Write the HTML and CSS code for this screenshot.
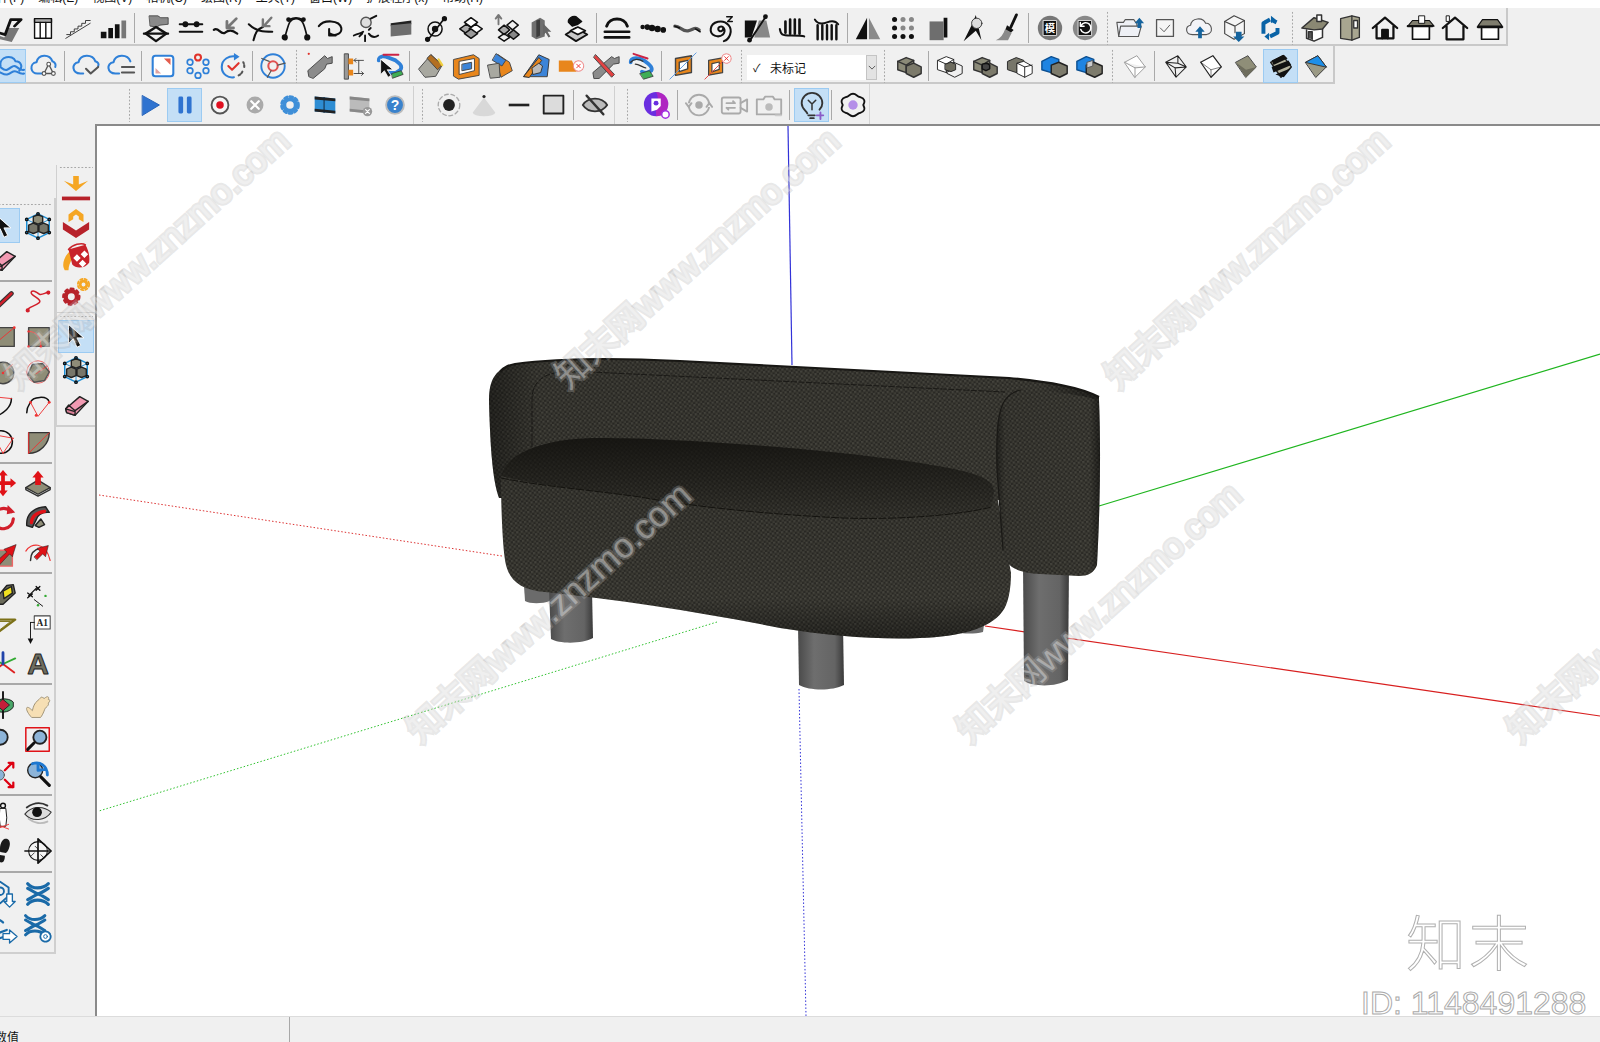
FILE: index.html
```html
<!DOCTYPE html>
<html lang="zh-CN">
<head>
<meta charset="utf-8">
<title>SketchUp</title>
<link rel="stylesheet" href="styles.css">
</head>
<body>
<svg class="defs" width="0" height="0" aria-hidden="true">
  <symbol id="cubes" viewBox="0 0 32 32"><path d="M4 11l9-4 8 3v9l-8 4-9-3z" fill="#8b8a78" stroke="#333"/><path d="M13 16l8-3 8 4v7l-8 4-8-4z" fill="#7c7a6b" stroke="#333"/><path d="M4 11l9 4v8M13 15l8-5" stroke="#333" fill="none"/></symbol>
  <symbol id="arrow" viewBox="0 0 32 32"><path d="M8 4l0 20 5-5 4 9 4-2-4-8h7z" fill="#111" stroke="#fff" stroke-width="1"/></symbol>
  <symbol id="cubeblue" viewBox="0 0 32 32"><path d="M16 3l12 6v14l-12 6-12-6V9z" fill="none" stroke="#1d8fd6" stroke-width="1.6"/><path d="M4 9l12 6 12-6M16 15v14" stroke="#1d8fd6" fill="none" stroke-width="1"/><path d="M11 6l5-2 5 2v6l-5 2-5-2z" fill="#8e8c78" stroke="#222"/><path d="M6 15l5-2 5 2v7l-5 2-5-2zM17 15l5-2 5 2v7l-5 2-5-2z" fill="#77766a" stroke="#222"/><circle cx="16" cy="3" r="1.3" fill="#1d8fd6"/><circle cx="4" cy="9" r="1.3" fill="#1d8fd6"/><circle cx="28" cy="9" r="1.3" fill="#1d8fd6"/><circle cx="4" cy="23" r="1.3" fill="#1d8fd6"/><circle cx="28" cy="23" r="1.3" fill="#1d8fd6"/><circle cx="16" cy="29" r="1.3" fill="#1d8fd6"/></symbol>
  <symbol id="eraser" viewBox="0 0 32 32"><path d="M5 19L20 6l9 5-14 15-9-3z" fill="#f29ab2" stroke="#222"/><path d="M5 19l3-4 7 6 14-10" fill="none" stroke="#222"/><path d="M5 19l10 3v4l-9-3z" fill="#d97f97" stroke="#222"/></symbol>
  <symbol id="wave" viewBox="0 0 32 32"><path d="M5 5c5 6 16 6 22 0M5 27c5-6 16-6 22 0M5 10c6 3 8 5 11 6 4-1 6-3 11-6M5 22c6-3 8-5 11-6 4 1 6 3 11 6" fill="none" stroke="#1a6aa8" stroke-width="3.4"/></symbol>
  <symbol id="frame" viewBox="0 0 32 32"><path d="M8 8l17-3v18L8 26z" fill="#e8861c" stroke="#444"/><path d="M12 12l9-2v9l-9 3z" fill="#fff" stroke="#444"/></symbol>
</svg>

<nav class="menu">
  <span>文件(F)</span><span>编辑(E)</span><span>视图(V)</span><span>相机(C)</span><span>绘图(R)</span><span>工具(T)</span><span>窗口(W)</span><span>扩展程序(x)</span><span>帮助(H)</span>
</nav>

<div class="tbar row1">
  <span class="btn"><svg class="ico" viewBox="0 0 32 32"><path d="M3 23l9 3 5-10h11l-8 15-13-3z" fill="#777" stroke="none"/><path d="M2 20l11 3 6-16h11l-7 7" stroke-width="3"/></svg></span>
  <span class="btn"><svg class="ico" viewBox="0 0 32 32"><rect x="7" y="6" width="18" height="21" fill="#fff"/><path d="M7 6h18v4H7z" fill="#aaa"/><path d="M13 10v17M19 10v17"/></svg></span>
  <span class="btn"><svg class="ico" viewBox="0 0 32 32" stroke-width="1"><path d="M3 27L29 11" stroke="#333"/><path d="M4 23h4v-3h4v-3h4v-3h4v-3h4V8h5" stroke="#333"/></svg></span>
  <span class="btn"><svg class="ico" viewBox="0 0 32 32" stroke="none"><path d="M3 20h6v7H3zM11 16h5v11h-5zM18 12h5v15h-5z" fill="#111" stroke="none"/><path d="M25 8h5v19h-5z" fill="#777" stroke="none"/></svg></span>
  <i class="sep w8"></i>
  <span class="btn"><svg class="ico" viewBox="0 0 32 32"><path d="M9 3h9l3 2h8v7l-9 1-3 2-7-1z" fill="#8a8a8a" stroke="#333" stroke-width=".8"/><path d="M16 15l11 7-11 8-11-8z" stroke-width="2.6"/><path d="M3 22h26" stroke-width="2.2"/></svg></span>
  <span class="btn"><svg class="ico" viewBox="0 0 32 32" stroke-width="2.2"><path d="M4 12h24M4 20h24"/><circle cx="10" cy="12" r="2" fill="#111"/><circle cx="22" cy="12" r="2" fill="#111"/></svg></span>
  <span class="btn"><svg class="ico" viewBox="0 0 32 32"><path d="M3 18c5-4 7 6 12 3 4-3 7-3 13 1" stroke-width="2.4"/><path d="M17 16l10-10M17 9v7h7" stroke="#777" stroke-width="3"/></svg></span>
  <span class="btn"><svg class="ico" viewBox="0 0 32 32"><path d="M3 12c8 8 16 8 25 8M8 29c2-8 4-12 10-14" stroke-width="2.2"/><path d="M19 14l8-9M18 7v7h7" stroke="#777" stroke-width="2.6"/></svg></span>
  <span class="btn"><svg class="ico" viewBox="0 0 32 32" stroke-width="1.8"><path d="M4 26C8 14 8 6 16 6s9 8 12 20"/><path d="M9 7c4-2 10-2 14 0" /><circle cx="4" cy="26" r="2.4" fill="#111"/><circle cx="28" cy="26" r="2.4" fill="#111"/><circle cx="8" cy="7" r="1.6" fill="#111"/><circle cx="24" cy="7" r="1.6" fill="#111"/></svg></span>
  <span class="btn"><svg class="ico" viewBox="0 0 32 32" stroke-width="2.2"><path d="M3 14c5-7 22-7 24 2 1 7-8 9-12 6"/><path d="M14 17v7h7"/></svg></span>
  <span class="btn"><svg class="ico" viewBox="0 0 32 32"><circle cx="16" cy="10" r="5.5" fill="#ddd" stroke="#555"/><path d="M21 6l6-3" stroke-width="2"/><path d="M3 24c6-3 6-1 10-4M19 22c3 4 6 5 10 2M15 24v6M12 22l-3 3M19 18l2-2" stroke-width="2"/></svg></span>
  <span class="btn"><svg class="ico" viewBox="0 0 32 32" stroke="none"><path d="M5 11l22-3v4L5 14z" fill="#222"/><path d="M5 13l22-2v12l-22 2z" fill="#6e6e6e"/></svg></span>
  <span class="btn"><svg class="ico" viewBox="0 0 32 32" stroke-width="1.6"><circle cx="15" cy="17" r="7.5"/><path d="M8 28L24 7" stroke-width="1.8"/><circle cx="15" cy="17" r="2.6" fill="#111"/><circle cx="7" cy="28" r="2" fill="#111"/><circle cx="25" cy="6" r="2" fill="#111"/></svg></span>
  <span class="btn"><svg class="ico" viewBox="0 0 32 32" stroke-width="1.6"><path d="M16 5l7 5-7 5-7-5z" fill="#fff"/><path d="M8 11l7 5-7 5-7-5z" fill="#aaa" transform="translate(3 1)"/><path d="M24 11l7 5-7 5-7-5z" fill="#fff" transform="translate(-3 1)"/><path d="M16 17l7 5-7 5-7-5z" fill="#999"/></svg></span>
  <span class="btn"><svg class="ico" viewBox="0 0 32 32" stroke-width="1.6"><path d="M23 8l6 5-6 5-6-5z"/><path d="M14 13l6 5-6 5-6-5z" fill="#aaa"/><path d="M24 18l6 5-6 5-6-5z" fill="#888"/><path d="M14 22l6 4-6 4-6-4z"/><path d="M8 12V3M5 6l3-4 3 4" stroke="#777" stroke-width="2"/></svg></span>
  <span class="btn"><svg class="ico" viewBox="0 0 32 32" stroke="none"><path d="M6 10l9-5 5 3v17l-9 3-5-3z" fill="#6f6f6f" stroke="none"/><path d="M11 8l4-1v17l-4 2z" fill="#3d3d3d" stroke="none"/><path d="M18 11l9 9-4 0 3 5-2 1-3-5-3 3z" fill="#666" stroke="none"/></svg></span>
  <span class="btn"><svg class="ico" viewBox="0 0 32 32"><path d="M16 16l12 7-12 7-11-7z" fill="#c9c9c9" stroke-width="2"/><path d="M8 10c-1-4 4-7 8-6l6 5-4 3-6 2z" fill="#111"/><path d="M18 15l8 4-8 4-8-4z" fill="#fff" stroke-width="1.8"/></svg></span>
  <i class="sep w6"></i>
  <span class="btn"><svg class="ico" viewBox="0 0 32 32"><path d="M5 14C8 4 24 4 27 14" stroke-width="3.2"/><path d="M3 20c10 0 16 0 26 0M3 26h26" stroke-width="2.8"/></svg></span>
  <span class="btn"><svg class="ico" viewBox="0 0 32 32" stroke="none"><circle cx="6" cy="15" r="2.4" fill="#111"/><circle cx="11" cy="15" r="3" fill="#111"/><circle cx="16" cy="16" r="3.4" fill="#111"/><circle cx="22" cy="17" r="3.4" fill="#111"/><circle cx="28" cy="18" r="3" fill="#111"/></svg></span>
  <span class="btn"><svg class="ico" viewBox="0 0 32 32"><path d="M3 14c6 0 8 6 14 5s7-5 12-1" stroke="#555" stroke-width="3.4"/><path d="M3 14l5 2M25 17l5 3" stroke-width="1.6"/></svg></span>
  <span class="btn"><svg class="ico" viewBox="0 0 32 32" stroke-width="2.2"><path d="M17 17a2.5 2.5 0 1 1-4-2c4-2 8 3 4 8-5 4-14 1-13-6 1-8 13-11 19-4 5 6 1 15-5 17"/><path d="M21 4h6l-5 5h5" stroke-width="1.5"/></svg></span>
  <span class="btn"><svg class="ico" viewBox="0 0 32 32"><path d="M3 8h13l-6 18H3z" fill="#111" stroke="none"/><path d="M18 8l8 0 4 18H13z" fill="#888" stroke="none"/><path d="M8 30L26 3" stroke-width="2"/><circle cx="25" cy="4" r="1.8" fill="#111"/><circle cx="8" cy="29" r="1.8" fill="#111"/></svg></span>
  <span class="btn"><svg class="ico" viewBox="0 0 32 32" stroke-width="2.2"><path d="M3 17c1 6 2 7 12 7 8 0 12 0 14 1"/><path d="M9 9v12M14 7v15M19 7v15M24 7v15" stroke-width="2.8"/></svg></span>
  <span class="btn"><svg class="ico" viewBox="0 0 32 32" stroke-width="2.6"><path d="M3 7c3 5 8 5 13 3s9-2 12 2" stroke-width="2"/><path d="M6 13v15M11 13v15M16 13v15M21 13v15M26 13v15"/></svg></span>
  <i class="sep w6"></i>
  <span class="btn"><svg class="ico" viewBox="0 0 32 32" stroke="none"><path d="M15 5v23H3z" fill="#111" stroke="none"/><path d="M17 5v23h12z" fill="#8a8a8a" stroke="none"/></svg></span>
  <span class="btn"><svg class="ico" viewBox="0 0 32 32" stroke="none"><g fill="#111"><circle cx="7" cy="7" r="2.7"/><circle cx="16" cy="7" r="2.7" fill="#888"/><circle cx="25" cy="7" r="2.7" fill="#888"/><circle cx="7" cy="16" r="2.7"/><circle cx="16" cy="16" r="2.7" fill="#888"/><circle cx="25" cy="16" r="2.7" fill="#888"/><circle cx="7" cy="25" r="2.7"/><circle cx="16" cy="25" r="2.7"/><circle cx="25" cy="25" r="2.7"/></g></svg></span>
  <span class="btn"><svg class="ico" viewBox="0 0 32 32" stroke="none"><path d="M11 5h15v21h-4V5z" fill="#111"/><path d="M7 9h15v20H7z" fill="#6e6e6e"/></svg></span>
  <span class="btn"><svg class="ico" viewBox="0 0 32 32"><path d="M19 2l6 27-6-10-13 11 9-18z" fill="#111" stroke="none"/><circle cx="20" cy="11" r="5.5" fill="#ddd" stroke="#333" stroke-width="1"/></svg></span>
  <span class="btn"><svg class="ico" viewBox="0 0 32 32"><path d="M25 2l-6 13" stroke-width="3"/><path d="M15 13l7 5-3 3-6-3z" fill="#111" stroke="none"/><path d="M13 17l7 4-4 8H3c5-2 8-6 10-12z" fill="#8a8a8a" stroke="none"/></svg></span>
  <i class="sep w7"></i>
  <span class="btn"><svg class="ico" viewBox="0 0 32 32" stroke="none"><circle cx="16" cy="16" r="13" fill="#777"/><rect x="9" y="8" width="14" height="16" fill="#111" stroke="#ddd" stroke-width="1"/><text x="16" y="20.5" class="ico-text" fill="#fff">模</text></svg></span>
  <span class="btn"><svg class="ico" viewBox="0 0 32 32" stroke="none"><circle cx="16" cy="16" r="13" fill="#888"/><rect x="9" y="8" width="14" height="16" fill="#111" stroke="#ddd" stroke-width="1"/><path d="M12 13a5.5 5.5 0 1 1-.5 4.5M11 10v4h4" fill="none" stroke="#fff" stroke-width="1.6"/></svg></span>
  <i class="grip g10"></i>
  <span class="btn"><svg class="ico" viewBox="0 0 32 32" stroke="#555" stroke-width="1.2"><path d="M4 25l-2-15h7l2-3h9l2 3h1l2 15z" fill="#eef0f5"/><path d="M4 25l2-11h22l-3 11z" fill="#eef0f5"/><path d="M26 5l5 6h-3v5h-4v-5h-3z" fill="#15639d" stroke="none"/></svg></span>
  <span class="btn"><svg class="ico" viewBox="0 0 32 32" stroke="#555" stroke-width="1.4"><rect x="7" y="7" width="18" height="18" fill="#f5f5f5"/><path d="M11 16l4 4 6-7" stroke-width="1"/></svg></span>
  <span class="btn"><svg class="ico" viewBox="0 0 32 32" stroke="#555" stroke-width="1.2"><path d="M8 23c-8 0-8-9-2-10 1-8 13-9 16-2 7-1 9 11 1 12z" fill="#f3f3f7"/><path d="M16 14l5 6h-3v7h-4v-7h-3z" fill="#15639d" stroke="none"/></svg></span>
  <span class="btn"><svg class="ico" viewBox="0 0 32 32" stroke="#444" stroke-width="1.2"><path d="M15 3l11 5v14l-11 6-10-6V9z" fill="#f5f5f5"/><path d="M5 9l11 5 10-6M16 14v7"/><path d="M17 20h6v5h3l-6 6-6-6h3z" fill="#15639d" stroke="none"/></svg></span>
  <span class="btn"><svg class="ico" viewBox="0 0 32 32" stroke="#0a63a6" stroke-width="4.2" stroke-linecap="butt"><path d="M9 22V11l7-4M16 25l8-4v-5M23 10l-4-2M9 11l3-2" /><path d="M17 3l5 4-5 4zM15 21v8l-5-4z" fill="#0a63a6" stroke="none"/></svg></span>
  <i class="grip g10"></i>
  <span class="btn"><svg class="ico" viewBox="0 0 32 32" stroke-width="1.6" stroke="#333"><path d="M7 18v9l8 3 9-4v-9" fill="#fff"/><path d="M2 16L15 5l15 5-6 7-9 1z" fill="#8a8873"/><rect x="18" y="2" width="5" height="7" fill="#fff"/><path d="M9 27v-7h4v8" fill="#555"/></svg></span>
  <span class="btn"><svg class="ico" viewBox="0 0 32 32" stroke="#333" stroke-width="1.4"><path d="M6 6l12-3 8 2v21l-8 3-12-2z" fill="#a8a690"/><path d="M18 3v26"/><rect x="20" y="8" width="4" height="8" fill="#fff"/></svg></span>
  <span class="btn"><svg class="ico" viewBox="0 0 32 32" stroke-width="2.4"><path d="M3 16L16 5l13 11M7 14v13h18V14"/><path d="M13 27v-9h6v9" fill="#111"/></svg></span>
  <span class="btn"><svg class="ico" viewBox="0 0 32 32" stroke-width="1.8"><path d="M8 28V14h18v14z" fill="#fff"/><path d="M3 14l5-6h18l5 6z" fill="#7f7d6e" stroke-width="1.2"/><path d="M3 14h26" stroke-width="2.4"/><rect x="15" y="3" width="6" height="8" fill="#fff" stroke-width="1"/></svg></span>
  <span class="btn"><svg class="ico" viewBox="0 0 32 32" stroke-width="2.4"><path d="M3 16L16 5l13 11M7 14v14h18V14"/><rect x="7" y="3" width="3" height="6" fill="#fff" stroke-width="1"/></svg></span>
  <span class="btn"><svg class="ico" viewBox="0 0 32 32" stroke-width="1.8"><path d="M7 28V14h18v14z" fill="#fff"/><path d="M3 14l5-7h16l5 7z" fill="#7f7d6e" stroke-width="1.2"/><path d="M3 15h26" stroke-width="2.4"/></svg></span>
</div>

<div class="tbar row2">
  <span class="btn on"><svg class="ico" viewBox="0 0 32 32" stroke="#2f80d8" stroke-width="2.2"><path d="M7 16C5 6 20 3 23 11c6 0 8 6 4 10"/><path d="M2 17c4-4 7 5 12 3s6-6 10-3 6 4 8 3M2 23c4-3 7 3 12 2s6-5 10-3 6 3 8 2"/></svg></span>
  <span class="btn"><svg class="ico" viewBox="0 0 32 32" stroke="#2f80d8" stroke-width="2.2"><path d="M10 24c-9 1-10-11-2-12 2-9 14-9 17-1 3 1 4 4 3 6M10 24h4"/><path d="M21 14l-5 10h10z" stroke="#555" stroke-width="1.4"/><circle cx="21" cy="14" r="2" fill="#fff" stroke="#555" stroke-width="1.2"/><circle cx="16" cy="24" r="2" fill="#fff" stroke="#555" stroke-width="1.2"/><circle cx="26" cy="24" r="2" fill="#fff" stroke="#555" stroke-width="1.2"/></svg></span>
  <i class="sep w7"></i>
  <span class="btn"><svg class="ico" viewBox="0 0 32 32" stroke="#2f80d8" stroke-width="2.2"><path d="M13 24h-3c-9 0-10-11-2-12 2-9 15-9 18-1 3 1 4 3 3 5"/><path d="M16 19l5 5 8-7" stroke="#555"/></svg></span>
  <span class="btn"><svg class="ico" viewBox="0 0 32 32" stroke="#2f80d8" stroke-width="2.2"><path d="M14 24h-4c-9 0-10-11-2-12 2-9 15-9 18-1"/><path d="M17 17h13M17 23h13" stroke="#555"/></svg></span>
  <i class="sep w7"></i>
  <span class="btn"><svg class="ico" viewBox="0 0 32 32"><rect x="5" y="5" width="22" height="22" rx="3" fill="#fff" stroke="#2f80d8" stroke-width="2.2"/><path d="M17 8h7v7z" fill="#e35d4e" stroke="none"/><path d="M8 24v-6l6 6z" fill="#e0a3a0" stroke="none"/></svg></span>
  <span class="btn"><svg class="ico" viewBox="0 0 32 32" stroke="#2f80d8" stroke-width="1.8"><circle cx="16" cy="7" r="3.2" stroke="#e0332b" stroke-width="2.2"/><circle cx="24.5" cy="12" r="3"/><circle cx="24.5" cy="21" r="3"/><circle cx="16" cy="26" r="3"/><circle cx="7.5" cy="21" r="3"/><circle cx="7.5" cy="12" r="3"/></svg></span>
  <span class="btn"><svg class="ico" viewBox="0 0 32 32" stroke="#2f80d8" stroke-width="2.2"><path d="M20 6C12 4 4 9 4 17s7 12 13 11"/><path d="M22 26c2-1 3-2 4-4M28 17c0-2 0-3-1-5" stroke="#555" stroke-dasharray="2 2"/><path d="M17 2l6 4-6 4z" fill="#2f80d8" stroke="none"/><path d="M11 16l4 4 7-7" stroke="#e0332b"/></svg></span>
  <i class="sep w5"></i>
  <span class="btn"><svg class="ico" viewBox="0 0 32 32" stroke="#2f80d8" stroke-width="2"><circle cx="16" cy="16" r="12.5"/><circle cx="16" cy="16" r="5" stroke="#e05050" stroke-width="2.2"/><path d="M12 11L4 8M21 15l8-2M14 21l-4 7" stroke="#555" stroke-width="1.3"/></svg></span>
  <i class="grip g12"></i>
  <span class="btn"><svg class="ico" viewBox="0 0 32 32" stroke="none"><path d="M4 27l-1-6L21 5l3 3 5-2v7l-6 1-2 5L9 29z" fill="#8b8b8b" stroke="#444" stroke-width="1"/><circle cx="4" cy="3" r="1.2" fill="#e0332b"/></svg></span>
  <span class="btn"><svg class="ico" viewBox="0 0 32 32" stroke="#444" stroke-width="1"><rect x="5" y="3" width="4" height="27" fill="#999"/><path d="M9 8h5v6H9zM9 20h5v6H9z" fill="#e8861c" stroke="none"/><path d="M15 10h10M15 24h10M20 10v14M17 8l-2 2 2 2M23 22l2 2-2 2"/></svg></span>
  <span class="btn"><svg class="ico" viewBox="0 0 32 32"><path d="M4 10c0-5 6-5 10-3l8 3c4 3 8 6 5 10-3 3-8 4-13 3" stroke="#2f80d8" stroke-width="4"/><path d="M9 4h16" stroke="#c24" stroke-width="2"/><path d="M18 24l10-3 2 4-11 4z" fill="#3fae55" stroke="#333" stroke-width=".8"/><path d="M6 9l0 16 4-4 4 7 3-2-4-6h6z" fill="#111" stroke="#fff" stroke-width=".8"/></svg></span>
  <i class="sep w6"></i>
  <span class="btn"><svg class="ico" viewBox="0 0 32 32" stroke="#444" stroke-width="1"><path d="M3 19l13-15 12 11-7 12-11 1z" fill="#a8a8a0"/><path d="M16 4l12 11-5 5L12 8z" fill="#b36f22"/><path d="M24 9l4 6" stroke="#f0d040" stroke-width="2.4"/></svg></span>
  <span class="btn"><svg class="ico" viewBox="0 0 32 32" stroke="#444" stroke-width="1"><path d="M3 9l21-5 6 4v18L8 30l-5-3z" fill="#e8861c"/><path d="M9 11l16-3v13L9 25z" fill="#fff"/><path d="M12 14l10-2v7l-10 2z" fill="#3c84d8"/></svg></span>
  <span class="btn"><svg class="ico" viewBox="0 0 32 32" stroke="#444" stroke-width="1"><path d="M13 4l12 8 3 9-12 7-3-10z" fill="#e8861c"/><path d="M11 3l10 7-4 6-10-6z" fill="#3c84d8"/><path d="M2 15l12-2 1 15-10 1z" fill="#a8a8a0"/></svg></span>
  <span class="btn"><svg class="ico" viewBox="0 0 32 32" stroke="#333" stroke-width="1"><path d="M3 27L19 4l11 5-2 18z" fill="#3c84d8"/><path d="M3 27L19 7l3 3-13 18z" fill="#e8861c"/><path d="M12 18l7-5 4 3-2 7-8 2z" fill="#bbb"/></svg></span>
  <span class="btn"><svg class="ico" viewBox="0 0 32 32" stroke="none"><path d="M3 10h14l5 12H3z" fill="#e8861c"/><circle cx="24" cy="16" r="5.5" fill="#fff" stroke="#e88" stroke-dasharray="2 1" stroke-width="1.1"/><path d="M22 14l4 4M26 14l-4 4" stroke="#e33" stroke-width="1"/></svg></span>
  <span class="btn"><svg class="ico" viewBox="0 0 32 32" stroke="#444" stroke-width="1"><path d="M3 29l-1-6L22 6l3 2 5-2v7l-6 1-15 15z" fill="#8b8b8b"/><path d="M5 4l20 21-3 3L3 7z" fill="#e24242"/></svg></span>
  <span class="btn"><svg class="ico" viewBox="0 0 32 32"><path d="M5 12c0-6 10-5 14-2 6 4 10 8 8 11-2 2-8 3-10 1" stroke="#2f80d8" stroke-width="4"/><path d="M5 12c3-4 9-4 13-1M10 14c4 0 8 4 11 4" stroke="#333" stroke-width="1.4"/><path d="M8 3l15 5" stroke="#c24" stroke-width="2"/><path d="M15 24l10-3 4 6-10 3z" fill="#3fae55" stroke="#333" stroke-width=".8"/></svg></span>
  <i class="sep w7"></i>
  <span class="btn"><svg class="ico" viewBox="0 0 32 32"><use href="#frame" x="0" y="0" width="32" height="32"/><path d="M2 30L30 2" stroke="#5d9ae0" stroke-width="1"/></svg></span>
  <span class="btn"><svg class="ico" viewBox="0 0 32 32"><use href="#frame" x="-1" y="3" width="28" height="28"/><path d="M2 30L24 8" stroke="#e24242" stroke-width="1"/><circle cx="25" cy="8" r="5" fill="#fff" stroke="#e88" stroke-dasharray="2 1" stroke-width="1.1"/><path d="M23 6l4 4M27 6l-4 4" stroke="#e33" stroke-width="1"/></svg></span>
  <i class="grip g12"></i>
  <div class="combo"><span class="combo-check">✓</span><span class="combo-label">未标记</span><span class="combo-arrow"><svg class="chev" viewBox="0 0 10 6"><path d="M1 1l4 4 4-4"/></svg></span></div>
  <i class="grip g14"></i>
  <span class="btn"><svg class="ico" viewBox="0 0 32 32"><use href="#cubes"/></svg></span>
  <i class="sep w6"></i>
  <span class="btn"><svg class="ico" viewBox="0 0 32 32" stroke="#222" stroke-width="1"><path d="M3 10l9-4 8 3v10l-8 4-9-3zM3 10l9 4v9M12 14l8-5" fill="#fff"/><path d="M13 15l7-3 9 4v8l-8 4-8-4z" fill="none"/><path d="M11 14l6-2 5 2v6l-5 2-6-2z" fill="#6d6b5e"/></svg></span>
  <span class="btn"><svg class="ico" viewBox="0 0 32 32"><use href="#cubes"/><path d="M13 14l5-1 3 2v4l-4 2-4-2z" fill="#444" stroke="#111"/></svg></span>
  <span class="btn"><svg class="ico" viewBox="0 0 32 32" stroke="#222" stroke-width="1"><path d="M3 11l9-4 8 3v9l-8 4-9-3z" fill="#77766a"/><path d="M13 13l7-2 9 5v8l-8 4-8-4z" fill="#fff"/><path d="M13 13l8 4 8-2M21 17v11"/></svg></span>
  <span class="btn"><svg class="ico" viewBox="0 0 32 32"><path d="M2 11l10-5 8 3v10l-8 4-10-3z" fill="#1e84e2" stroke="#0b4f91"/><path d="M12 15l8-3 9 4v8l-8 4-9-4z" fill="#7d7b6c" stroke="#222"/></svg></span>
  <span class="btn"><svg class="ico" viewBox="0 0 32 32"><path d="M2 11l10-5 8 3v10l-8 4-10-3z" fill="#1e84e2" stroke="#0b4f91"/><path d="M12 15l8-3 9 4v8l-8 4-9-4z" fill="#7d7b6c" stroke="#222"/><path d="M13 12l6-2v6l-6 2z" fill="#ccc" stroke="#555" stroke-width="1"/></svg></span>
  <i class="grip g10"></i>
  <span class="btn"><svg class="ico" viewBox="0 0 32 32" stroke="#999" stroke-width="1"><path d="M5 12l13-7 9 12-11 11zM5 12l11 6 11-1M16 18v10" fill="#fff"/></svg></span>
  <i class="sep w6"></i>
  <span class="btn"><svg class="ico" viewBox="0 0 32 32" stroke="#222" stroke-width="1.1"><path d="M5 12l13-7 9 12-11 11zM5 12l13 1 9 4M18 5v8M16 28l-1-10-10-6M15 18l12-1"/></svg></span>
  <span class="btn"><svg class="ico" viewBox="0 0 32 32" stroke="#222" stroke-width="1.3"><path d="M5 12l13-7 9 12-11 11z" fill="#fff"/><path d="M5 12l11 8v8M16 20l11-3" stroke-width=".6"/></svg></span>
  <span class="btn"><svg class="ico" viewBox="0 0 32 32" stroke="#444" stroke-width="1"><path d="M5 12l13-7 9 12-11 11z" fill="#8f8e78"/><path d="M5 12l11 8 11-3-11 11z" fill="#6d6c5c" stroke="none"/></svg></span>
  <span class="btn on"><svg class="ico" viewBox="0 0 32 32" stroke="none"><path d="M5 12l13-7 9 12-11 11z" fill="#b4b29c" stroke="#222"/><path d="M6 10l13-6 4 4-15 7zM6 17l18-7 3 5-19 8zM10 25l17-7-8 10z" fill="#111"/></svg></span>
  <span class="btn"><svg class="ico" viewBox="0 0 32 32" stroke="#333" stroke-width="1"><path d="M5 12l13-7 9 12-11 11z" fill="#9b9a85"/><path d="M5 12l13-7 9 12z" fill="#1e8fe8"/></svg></span>
</div>

<div class="tbar row3">
  <i class="grip g5"></i>
  <span class="btn"><svg class="ico" viewBox="0 0 32 32"><path d="M8 6l18 10L8 27z" fill="#2f73d0" stroke="#1f5fb8" stroke-width="1"/></svg></span>
  <span class="btn on"><svg class="ico" viewBox="0 0 32 32" stroke="none"><rect x="9" y="7" width="5" height="18" rx="1.5" fill="#2f73d0"/><rect x="18" y="7" width="5" height="18" rx="1.5" fill="#2f73d0"/></svg></span>
  <span class="btn"><svg class="ico" viewBox="0 0 32 32"><circle cx="16" cy="16" r="9" fill="#f5f5f5" stroke="#555" stroke-width="2"/><circle cx="16" cy="16" r="4" fill="#e01020" stroke="none"/></svg></span>
  <span class="btn"><svg class="ico" viewBox="0 0 32 32"><circle cx="16" cy="16" r="9" fill="#aaa" stroke="none"/><path d="M12 12l8 8M20 12l-8 8" stroke="#fff" stroke-width="2.4"/></svg></span>
  <span class="btn"><svg class="ico" viewBox="0 0 32 32"><circle cx="16" cy="16" r="6.2" stroke="#3f8fd8" stroke-width="4.4"/><circle cx="16" cy="16" r="9" stroke="#3f8fd8" stroke-width="3" stroke-dasharray="3 3" fill="none"/></svg></span>
  <span class="btn"><svg class="ico" viewBox="0 0 32 32" stroke="none"><path d="M5 7l22 2v16L5 23z" fill="#2e8dd3"/><path d="M5 7l22 2v3L5 10zM5 20l22 2v3L5 23z" fill="#222"/><path d="M15 8v16" stroke="#123" stroke-width="1"/></svg></span>
  <span class="btn"><svg class="ico" viewBox="0 0 32 32" stroke="none"><path d="M5 7l21 2v16L5 23z" fill="#bbb"/><path d="M5 7l21 2v3L5 10zM5 20l21 2v3L5 23z" fill="#888"/><circle cx="24" cy="23" r="5" fill="#999"/><path d="M22 21l4 4M26 21l-4 4" stroke="#fff" stroke-width="1.3"/></svg></span>
  <span class="btn"><svg class="ico" viewBox="0 0 32 32"><circle cx="16" cy="16" r="9.5" fill="#3a82cc" stroke="#bbb" stroke-width="2"/><text x="16" y="21" class="ico-help">?</text></svg></span>
  <i class="sep w2 clear"></i>
  <i class="grip g17"></i>
  <span class="btn"><svg class="ico" viewBox="0 0 32 32"><circle cx="16" cy="16" r="11.5" stroke="#aaa" stroke-width="1.4" stroke-dasharray="4 3"/><circle cx="16" cy="16" r="6.3" fill="#222" stroke="none"/></svg></span>
  <span class="btn"><svg class="ico" viewBox="0 0 32 32" stroke="none"><circle cx="16" cy="7" r="1.7" fill="#222"/><path d="M16 8l12 16a12 4 0 0 1-24 0z" fill="#d8d8d8"/></svg></span>
  <span class="btn"><svg class="ico" viewBox="0 0 32 32"><path d="M5 16h22" stroke="#222" stroke-width="2.8" stroke-linecap="butt"/></svg></span>
  <span class="btn"><svg class="ico" viewBox="0 0 32 32"><rect x="5" y="6" width="21" height="19" fill="#dcdcdc" stroke="#222" stroke-width="2"/></svg></span>
  <i class="sep w6"></i>
  <span class="btn"><svg class="ico" viewBox="0 0 32 32" stroke="#333" stroke-width="2"><path d="M3 16c6-9 20-9 26 0-6 9-20 9-26 0z" fill="#bbb"/><path d="M7 6l18 20" stroke-width="2.4"/></svg></span>
  <i class="sep w3 clear"></i>
  <i class="grip g24"></i>
  <span class="btn"><svg class="ico" viewBox="0 0 32 32"><circle cx="15" cy="15" r="13" fill="#6a2ee0" stroke="none"/><path d="M15 15a13 13 0 0 0 0-13 13 13 0 0 1 0 26z" fill="#e81fa8" stroke="none" opacity=".55"/><path d="M10 9h10v8l-4 4-6 2z" fill="#fff" stroke="none"/><circle cx="15" cy="14" r="2.6" fill="#6a2ee0" stroke="none"/><circle cx="25" cy="26" r="4" fill="#fff" stroke="#a02ee0" stroke-width="1.6"/></svg></span>
  <i class="sep w7"></i>
  <span class="btn"><svg class="ico" viewBox="0 0 32 32" stroke="#aaa" stroke-width="2"><circle cx="16" cy="16" r="11"/><circle cx="16" cy="16" r="3" fill="#aaa"/><path d="M2 14l3 4 3-4M24 18l3-4 3 4" fill="#f0f0f0"/></svg></span>
  <span class="btn"><svg class="ico" viewBox="0 0 32 32" stroke="#aaa" stroke-width="2"><rect x="3" y="8" width="20" height="17" rx="2"/><path d="M23 14l7-4v13l-7-4M8 14h9M15 12l2 2M8 19h9M8 19l2 2"/></svg></span>
  <span class="btn"><svg class="ico" viewBox="0 0 32 32" stroke="#aaa" stroke-width="2"><path d="M3 10h7l2-3h8l2 3h7v16H3z"/><circle cx="16" cy="18" r="4" fill="#bbb" stroke="none"/><path d="M23 27h6" stroke="#ccc"/></svg></span>
  <i class="sep w8"></i>
  <span class="btn on"><svg class="ico" viewBox="0 0 32 32" stroke="#333" stroke-width="2"><path d="M11 25c-1-3-6-5-6-11a11 11 0 0 1 22 0c0 3-1 5-3 7"/><path d="M12 11l4 4 4-4M16 15v6" stroke-width="1.6"/><path d="M12 27h7M14 30h4" stroke-width="1.8"/><path d="M25 24v7M21 27h7" stroke="#8a5cc8" stroke-width="2"/></svg></span>
  <i class="sep w6"></i>
  <span class="btn"><svg class="ico" viewBox="0 0 32 32" stroke-width="2"><path d="M16 4c3 0 4 2 6 3s5 1 6 4c1 3-1 4-1 5s2 3 1 5c-1 3-4 3-6 4s-3 3-6 3-4-2-6-3-5-1-6-4c-1-2 1-4 1-5s-2-2-1-5c1-3 4-3 6-4s3-3 6-3z"/><circle cx="16" cy="16" r="5" fill="#b48ee8" stroke="none"/></svg></span>
</div>

<div class="main">
  <aside class="dock">
    <div class="panel panel-left">
      <i class="grip-h"></i>
      <div class="grid">
        <span class="cell on-left"><svg class="ico" viewBox="0 0 32 32"><use href="#arrow"/></svg></span>
        <span class="cell"><svg class="ico" viewBox="0 0 32 32"><use href="#cubeblue"/></svg></span>
        <span class="cell"><svg class="ico" viewBox="0 0 32 32"><use href="#eraser"/></svg></span>
        <span class="cell"></span>
      </div>
      <i class="rule"></i>
      <div class="grid">
        <span class="cell"><svg class="ico" viewBox="0 0 32 32"><path d="M6 26L25 8" stroke="#333" stroke-width="5"/><path d="M6 26L25 8" stroke="#d21f2b" stroke-width="2.6"/></svg></span>
        <span class="cell"><svg class="ico" viewBox="0 0 32 32" stroke="#d21f2b" stroke-width="1.6"><path d="M6 27c-3-4 6-5 11-9s-11-8-8-12c3-3 6 2 9 3s9-4 9-1"/><circle cx="5" cy="26" r="1.4" fill="#d21f2b"/><circle cx="27" cy="7" r="1.4" fill="#d21f2b"/></svg></span>
        <span class="cell"><svg class="ico" viewBox="0 0 32 32"><rect x="4" y="6" width="24" height="20" fill="#8f8d77" stroke="#444"/><path d="M4 26L28 6" stroke="#e33" stroke-width="1"/><circle cx="28" cy="6" r="1.5" fill="#e33" stroke="none"/></svg></span>
        <span class="cell"><svg class="ico" viewBox="0 0 32 32"><path d="M6 6h22v20H6z" fill="#8f8d77" stroke="#444"/><path d="M6 10c8 0 13 6 13 16" stroke="#f55" stroke-width="1"/><circle cx="6" cy="10" r="1.3" fill="#e33" stroke="none"/><circle cx="6" cy="26" r="1.3" fill="#e33" stroke="none"/><circle cx="19" cy="26" r="1.3" fill="#e33" stroke="none"/></svg></span>
        <span class="cell"><svg class="ico" viewBox="0 0 32 32"><circle cx="16" cy="17" r="11.5" fill="#8f8d77" stroke="#444"/><path d="M16 17l10-9" stroke="#e33" stroke-width="1"/><circle cx="16" cy="17" r="1.4" fill="#e33" stroke="none"/></svg></span>
        <span class="cell"><svg class="ico" viewBox="0 0 32 32"><circle cx="16" cy="16" r="12" fill="none" stroke="#e66" stroke-width="1"/><path d="M10 8l11-1 7 9-5 9-11 2-7-8z" fill="#8f8d77" stroke="#555"/><path d="M14 18l11-8" stroke="#e33" stroke-width="1"/></svg></span>
        <span class="cell"><svg class="ico" viewBox="0 0 32 32"><path d="M8 26c9-3 17-10 17-19" stroke-width="1.6"/><path d="M5 5l20 2M5 5l3 21" stroke="#e33" stroke-width="1"/></svg></span>
        <span class="cell"><svg class="ico" viewBox="0 0 32 32"><path d="M8 11c2-6 18-8 20 0" stroke-width="1.6"/><path d="M4 22c0-6 2-8 4-11" stroke-width="1.6"/><path d="M8 11l8 15L28 11M8 11h0" stroke="#e33" stroke-width="1"/><circle cx="8" cy="11" r="1.5" fill="#e33" stroke="none"/><circle cx="28" cy="11" r="1.5" fill="#e33" stroke="none"/><circle cx="14" cy="25" r="1.5" fill="#e33" stroke="none"/></svg></span>
        <span class="cell"><svg class="ico" viewBox="0 0 32 32"><circle cx="14" cy="16" r="12" stroke-width="1.6"/><path d="M5 8l11 20M5 8l22 4M16 28l11-16" stroke="#e33" stroke-width="1"/></svg></span>
        <span class="cell"><svg class="ico" viewBox="0 0 32 32"><path d="M6 6h22c0 12-10 22-22 22z" fill="#8f8d77" stroke="#333"/><path d="M6 6v22M6 28L28 6" stroke="#e33" stroke-width="1"/></svg></span>
      </div>
      <i class="rule"></i>
      <div class="grid">
        <span class="cell"><svg class="ico" viewBox="0 0 32 32" stroke="none"><path d="M16 2l5 6h-3v6h6v-3l6 5-6 5v-3h-6v6h3l-5 6-5-6h3v-6H8v3l-6-5 6-5v3h6V8h-3z" fill="#e01217"/></svg></span>
        <span class="cell"><svg class="ico" viewBox="0 0 32 32"><path d="M3 21l13-8 13 8-13 7z" fill="#8f8d77" stroke="#333"/><path d="M3 21v2l13 7 13-7v-2" stroke="#333"/><path d="M16 3l6 7h-3v8h-6v-8h-3z" fill="#e01217" stroke="none"/></svg></span>
        <span class="cell"><svg class="ico" viewBox="0 0 32 32" stroke="#d21f2b" stroke-width="3.4"><path d="M27 17a11 11 0 0 1-21 4M5 15c2-9 13-12 20-6"/><path d="M21 2l8 8-9 2z" fill="#d21f2b" stroke="none"/></svg></span>
        <span class="cell"><svg class="ico" viewBox="0 0 32 32"><path d="M4 24c-1-12 7-19 20-20l4 6c-9-1-13 4-14 8l-4 8z" fill="#555" stroke="#222"/><path d="M9 21c0-6 5-11 14-12" stroke="#e01217" stroke-width="3.4"/><path d="M13 24l6-7 4 6-6 3z" fill="#8f8d77" stroke="#222"/></svg></span>
        <span class="cell"><svg class="ico" viewBox="0 0 32 32"><rect x="3" y="13" width="23" height="17" fill="#8f8d77" stroke="#e66"/><path d="M8 26l12-11-3-3 13-5-4 13-3-3-11 12z" fill="#e01217" stroke="#222" stroke-width=".6"/></svg></span>
        <span class="cell"><svg class="ico" viewBox="0 0 32 32"><path d="M3 14C8 5 24 3 29 24" stroke="#e33" stroke-width="1.2"/><path d="M8 24c0-8 5-12 11-13" stroke="#333" stroke-width="1.6"/><path d="M12 20l6-6-3-3 12-3-3 12-3-3-6 6z" fill="#e01217" stroke="#222" stroke-width=".6"/></svg></span>
      </div>
      <i class="rule"></i>
      <div class="grid">
        <span class="cell"><svg class="ico" viewBox="0 0 32 32"><path d="M3 27L20 7l7-1 2 9-13 12z" fill="#6b6b5b" stroke="#222"/><path d="M16 13l9-5 1 7-9 6z" fill="#f0e020" stroke="#222"/></svg></span>
        <span class="cell"><svg class="ico" viewBox="0 0 32 32"><path d="M6 18l8-8M18 8l-4 4M14 8l4 4M5 15l5 4M5 20l5-4" stroke-width="1.4"/><path d="M12 22l9 7" stroke-width="1"/><circle cx="24" cy="18" r="1.3" fill="#3a3" stroke="none"/><circle cx="16" cy="28" r="1.3" fill="#3a3" stroke="none"/></svg></span>
        <span class="cell"><svg class="ico" viewBox="0 0 32 32"><path d="M2 26L29 6 3 6z" fill="#f0e6a0" fill-opacity="0" stroke="#7c7118" stroke-width="2.4"/><path d="M5 8h19L6 22z" fill="#eee" stroke="#7c7118" stroke-width="1"/></svg></span>
        <span class="cell"><svg class="ico" viewBox="0 0 32 32"><rect x="12" y="2" width="17" height="14" fill="#fff" stroke="#444" stroke-width="1.1"/><text x="20.5" y="13" class="ico-label">A1</text><path d="M8 9h4M8 9v17" stroke-width="1"/><path d="M5 26h6l-3 6z" fill="#111" stroke="none"/></svg></span>
        <span class="cell"><svg class="ico" viewBox="0 0 32 32"><path d="M16 16l13-6M16 16L4 10" stroke="#3a3" stroke-width="2"/><path d="M16 16l12 9" stroke="#d22" stroke-width="2"/><path d="M16 16L4 25" stroke="#d22" stroke-width="2"/><path d="M16 16V4" stroke="#24a" stroke-width="3"/></svg></span>
        <span class="cell"><svg class="ico" viewBox="0 0 32 32"><text x="16" y="27" class="ico-3d">A</text></svg></span>
      </div>
      <i class="rule"></i>
      <div class="grid">
        <span class="cell"><svg class="ico" viewBox="0 0 32 32"><path d="M6 16c0-7 16-9 21-3v5c-4 7-16 7-21 3z" fill="#4aa86a" stroke="#222" stroke-width="1"/><path d="M16 2v28" stroke-width="2"/><path d="M16 10l7 6-7 6-7-6z" fill="#c41e3a" stroke="#222" stroke-width="1"/></svg></span>
        <span class="cell"><svg class="ico" viewBox="0 0 32 32"><path d="M9 29c-3-3-6-8-5-10 1-2 5 2 6 3 1-4 2-8 6-11s2-4 5-3 0 2 3 0 4 0 3 2c2 0 2 2 0 4 1 3-3 4-4 7s-3 7-4 8z" fill="#f6dfb4" stroke="#9d9074" stroke-width="1"/></svg></span>
        <span class="cell"><svg class="ico" viewBox="0 0 32 32"><circle cx="13" cy="13" r="8" fill="#8db4d8" stroke="#222" stroke-width="2"/><path d="M7 20l-6 7" stroke-width="3.4"/></svg></span>
        <span class="cell"><svg class="ico" viewBox="0 0 32 32"><rect x="3" y="3" width="25" height="25" fill="none" stroke="#e01217" stroke-width="1.6"/><circle cx="18" cy="13" r="7" fill="#8db4d8" stroke="#222" stroke-width="2"/><path d="M12 19l-7 7" stroke-width="3.2"/></svg></span>
        <span class="cell"><svg class="ico" viewBox="0 0 32 32"><circle cx="12" cy="16" r="5.5" fill="#8db4d8" stroke="#555" stroke-width="1"/><path d="M18 11l8-8M22 3h5v5M18 21l8 8M22 29h5v-5" stroke="#d01" stroke-width="2.4"/></svg></span>
        <span class="cell"><svg class="ico" viewBox="0 0 32 32"><circle cx="13" cy="11" r="8" fill="#8db4d8" stroke="#222"/><path d="M10 4c8-3 16 2 16 12M24 10l-8 1 0-7" stroke="#1e78d0" stroke-width="3"/><path d="M19 18l9 9" stroke-width="3.4"/></svg></span>
      </div>
      <i class="rule"></i>
      <div class="grid">
        <span class="cell"><svg class="ico" viewBox="0 0 32 32"><circle cx="16" cy="6" r="2.6"/><path d="M13 9h6l1 10-1 9h-6l-1-9z" fill="#fff" stroke-width="1"/><path d="M9 26l13 5M22 26L9 31" stroke="#e33" stroke-width="1"/></svg></span>
        <span class="cell"><svg class="ico" viewBox="0 0 32 32"><path d="M2 15c7-9 20-9 28-2-6 9-20 11-28 2z" fill="#ddd" stroke="#333" stroke-width="1.2"/><circle cx="15" cy="13" r="5.2" fill="#111" stroke="none"/><path d="M4 8c7-5 15-6 22-2" stroke="#333" stroke-width="2"/><path d="M6 20c6 5 14 6 20 3" stroke="#bbb" stroke-width="2"/></svg></span>
        <span class="cell"><svg class="ico" viewBox="0 0 32 32" stroke="none"><path d="M18 3c5-1 6 4 5 8s-2 6-4 7l-6-1c-1-5 1-13 5-14zM12 20l6 1c0 4-1 8-5 7-2-1-2-5-1-8z" fill="#1a1a1a"/></svg></span>
        <span class="cell"><svg class="ico" viewBox="0 0 32 32" stroke-width="1.1"><circle cx="16" cy="16" r="10" fill="#f5f5f5"/><path d="M2 16h26" stroke-width="1.6"/><path d="M16 3l14 13-14 13z" fill="none" stroke-width="1.8"/><path d="M13 11l3 3M19 20l3 3M9 21l3-3" stroke-width=".8"/></svg></span>
      </div>
      <i class="rule wide"></i>
      <div class="grid">
        <span class="cell"><svg class="ico" viewBox="0 0 32 32" stroke="#1a6aa8" stroke-width="2"><path d="M4 9l9-6 9 6v9l-9 8-9-6z"/><circle cx="13" cy="13" r="4"/><path d="M20 16h6v8h3l-6 6-6-6h3z" fill="#fff" stroke-width="1.4"/></svg></span>
        <span class="cell"><svg class="ico" viewBox="0 0 32 32"><use href="#wave"/></svg></span>
        <span class="cell"><svg class="ico" viewBox="0 0 32 32" stroke="#1a6aa8" stroke-width="2.4"><path d="M2 9c5-5 8-5 14 0M2 15l10 5 8-3M2 21l10 5 6-2"/><path d="M16 21h7v-4l8 7-8 7v-4h-7z" fill="#fff" stroke-width="1.4"/></svg></span>
        <span class="cell"><svg class="ico" viewBox="0 0 32 32"><use href="#wave" x="-2" y="-3" width="30" height="30"/><circle cx="24" cy="24" r="5.5" fill="#fff" stroke="#1a6aa8" stroke-width="2" stroke-dasharray="2.4 1.2"/><circle cx="24" cy="24" r="2" fill="none" stroke="#1a6aa8" stroke-width="1"/></svg></span>
      </div>
    </div>
    <div class="panel panel-right">
      <i class="grip-h top"></i>
      <div class="stack">
        <span class="cell short"><svg class="ico" viewBox="0 0 32 32"><path d="M13 1h6v9l10-4-13 11L3 6l10 4z" fill="#f5a623" stroke="none"/><rect x="1" y="23" width="30" height="4" fill="#b7222a" stroke="none"/></svg></span>
        <span class="cell short"><svg class="ico" viewBox="0 0 32 32"><path d="M8 15V7l8-6 8 6v8l-5-3V9l-3-2-3 2v3z" fill="#f5a623" stroke="none"/><path d="M2 15l14 9 14-9v8l-14 9-14-9z" fill="#b7222a" stroke="none"/></svg></span>
        <span class="cell"><svg class="ico" viewBox="0 0 32 32"><path d="M4 30c-4-6 0-15 5-20l3 8c-2 3-4 7-4 12z" fill="#f5a623" stroke="none"/><path d="M8 8L26 3c3 5 5 12 4 19-4 6-14 7-18 2z" fill="#c8232b" stroke="none"/><path d="M17 13l4 4-4 4-4-4zM25 9l4 4-4 4-4-4zM23 19l4 4-4 4-4-4z" fill="#fff" stroke="none"/><path d="M8 8c4-5 14-8 18-5" stroke="#c8232b" stroke-width="1.6"/></svg></span>
        <span class="cell"><svg class="ico" viewBox="0 0 32 32"><circle cx="11" cy="21" r="6" stroke="#b7222a" stroke-width="4.6"/><circle cx="11" cy="21" r="8.6" stroke="#b7222a" stroke-width="2.4" stroke-dasharray="3 3.6"/><circle cx="24" cy="8" r="3.6" stroke="#f5a623" stroke-width="3"/><circle cx="24" cy="8" r="6" stroke="#f5a623" stroke-width="2" stroke-dasharray="2.4 2.4"/></svg></span>
      </div>
      <i class="hr"></i>
      <i class="grip-h"></i>
      <div class="stack">
        <span class="cell short on-right"><svg class="ico" viewBox="0 0 32 32"><use href="#arrow"/></svg></span>
        <span class="cell"><svg class="ico" viewBox="0 0 32 32"><use href="#cubeblue"/></svg></span>
        <span class="cell"><svg class="ico" viewBox="0 0 32 32"><use href="#eraser"/></svg></span>
      </div>
    </div>
  </aside>
  <main class="canvas">
    <svg class="scene" viewBox="97 126 1503 890" width="1503" height="890">
      <defs>
        <pattern id="weave" width="4.6" height="4.6" patternUnits="userSpaceOnUse" patternTransform="rotate(-8)">
          <rect width="4.6" height="4.6" fill="#2a2925"/>
          <rect width="2.3" height="2.3" fill="#45443d"/>
          <rect x="2.3" y="2.3" width="2.3" height="2.3" fill="#3f3e37"/>
        </pattern>
        <linearGradient id="leg"><stop offset="0" stop-color="#4a4a4a"/><stop offset=".35" stop-color="#6e6e6e"/><stop offset=".8" stop-color="#646464"/><stop offset="1" stop-color="#3a3a3a"/></linearGradient>
        <linearGradient id="side"><stop offset="0" stop-color="#000" stop-opacity=".4"/><stop offset=".08" stop-color="#000" stop-opacity=".05"/><stop offset=".9" stop-color="#000" stop-opacity="0"/><stop offset="1" stop-color="#000" stop-opacity=".45"/></linearGradient>
        <linearGradient id="down" x2="0" y2="1"><stop offset="0" stop-color="#000" stop-opacity=".1"/><stop offset=".8" stop-color="#000" stop-opacity="0"/><stop offset="1" stop-color="#000" stop-opacity=".35"/></linearGradient>
        <linearGradient id="seat-fade" x2="0" y2="1"><stop offset="0" stop-color="#12110e" stop-opacity=".85"/><stop offset=".55" stop-color="#12110e" stop-opacity=".45"/><stop offset="1" stop-color="#12110e" stop-opacity=".1"/></linearGradient>
      </defs>
      <path d="M788 126L792 365" stroke="#3232d8" stroke-width="1.2" fill="none"/>
      <path d="M799 689L806 1016" stroke="#3232d8" stroke-width="1" stroke-dasharray="1.5 2" fill="none"/>
      <path d="M1600 354L1099 506" stroke="#1fb51f" stroke-width="1.2" fill="none"/>
      <path d="M717 622L99 811" stroke="#2fc22f" stroke-width="1" stroke-dasharray="1.5 2" fill="none"/>
      <path d="M99 495L502 556" stroke="#dd3333" stroke-width="1" stroke-dasharray="1.5 2" fill="none"/>
      <path d="M985 626L1600 716" stroke="#d81f1f" stroke-width="1.2" fill="none"/>
      <path d="M524 586h26v15c-8 3-20 3-25 0z" fill="#6b6b6b"/>
      <path d="M955 625h29l-1 7c-8 2-20 2-27 0z" fill="#6b6b6b"/>
      <path d="M549 590h43l1 48c-10 6-34 6-42 1z" fill="url(#leg)"/>
      <path d="M798 625h45l1 60c-12 6-34 6-45 0z" fill="url(#leg)"/>
      <path d="M1023 565h46l-1 115c-12 7-34 7-44 1z" fill="url(#leg)"/>
      <path d="M489 400C489 378 497 368 515 364C560 358 620 358 680 361L1009 378C1050 382 1080 387 1099 397L1097 480L1000 500L499 498C492 480 490 440 489 400Z" fill="url(#weave)"/>
      <path d="M489 400C489 378 497 368 515 364C560 358 620 358 680 361L1009 378C1050 382 1080 387 1099 397L1097 480L1000 500L499 498C492 480 490 440 489 400Z" fill="url(#side)"/>
      <path d="M500 372C505 366 510 365 515 364C560 358 620 358 680 361L1009 378C1050 382 1080 387 1099 397" fill="none" stroke="#181714" stroke-width="2.2"/>
      <path d="M532 447V400C532 380 545 372 570 371L1005 392" fill="none" stroke="#1a1916" stroke-dasharray="6 1.5"/>
      <path d="M501 476C505 455 540 438 600 438C700 438 900 455 967 472C985 477 992 482 996 490L1011 573C1011 590 1008 605 1002 612C990 628 960 637 920 638C880 640 830 636 780 628C700 612 620 600 545 592C520 590 508 580 505 560C502 540 501 500 501 476Z" fill="url(#weave)"/>
      <path d="M501 476C505 455 540 438 600 438C700 438 900 455 967 472C985 477 992 482 996 490L1011 573C1011 590 1008 605 1002 612C990 628 960 637 920 638C880 640 830 636 780 628C700 612 620 600 545 592C520 590 508 580 505 560C502 540 501 500 501 476Z" fill="url(#down)"/>
      <path d="M501 476C505 455 540 438 600 438C700 438 900 455 967 472C985 477 992 482 994 490L992 507C960 515 900 520 843 518C780 515 700 508 640 497C590 490 540 486 501 476Z" fill="url(#seat-fade)"/>
      <path d="M501 478C540 486 590 490 640 497C700 508 780 515 843 518C900 520 960 515 992 507" fill="none" stroke="#14130f" stroke-dasharray="8 1.5"/>
      <path d="M1021 390C1050 390 1080 395 1099 400C1101 450 1100 510 1097 565C1094 573 1088 576 1079 576L1040 574C1015 573 1004 565 1003 550L997 470C996 430 998 410 1005 400C1010 394 1015 391 1021 390Z" fill="url(#weave)"/>
      <path d="M1021 390C1050 390 1080 395 1099 400C1101 450 1100 510 1097 565C1094 573 1088 576 1079 576L1040 574C1015 573 1004 565 1003 550L997 470C996 430 998 410 1005 400C1010 394 1015 391 1021 390Z" fill="url(#side)"/>
      <path d="M1003 550L997 470C996 430 998 410 1005 400C1010 394 1015 391 1021 390" fill="none" stroke="#1a1916" stroke-width="1.2"/>
    </svg>
  </main>
</div>

<footer class="status">
  <span class="status-label">数值</span>
  <i class="status-div"></i>
</footer>

<div class="wm wm-a"><span class="wm-cn">知末网</span>www.znzmo.com</div>
<div class="wm wm-b"><span class="wm-cn">知末网</span>www.znzmo.com</div>
<div class="wm wm-c"><span class="wm-cn">知末网</span>www.znzmo.com</div>
<div class="wm wm-d"><span class="wm-cn">知末网</span>www.znzmo.com</div>
<div class="wm wm-e"><span class="wm-cn">知末网</span>www.znzmo.com</div>
<div class="wm wm-f"><span class="wm-cn">知末网</span>www.znzmo.com</div>
<div class="brand">知末</div>
<div class="brand-id">ID: 1148491288</div>
</body>
</html>
```
FILE: styles.css
```css
html, body { margin: 0; padding: 0; }
body {
  position: relative;
  width: 1600px;
  height: 1042px;
  overflow: hidden;
  background: #f0f0f0;
  font-family: "Liberation Sans", "Noto Sans CJK SC", sans-serif;
  font-size: 12px;
  color: #111;
}
.defs { position: absolute; }
i { display: block; font-style: normal; }

.menu {
  height: 8px;
  background: #fff;
  overflow: hidden;
  display: flex;
  gap: 14px;
  margin-left: -15px;
  line-height: 14px;
  white-space: nowrap;
}
.menu span { margin-top: -9px; }

.tbar {
  display: flex;
  align-items: center;
  height: 38px;
  box-sizing: border-box;
}
.row1 { margin-left: -9.5px; width: 1517px; padding-top: 4px; border-bottom: 2px solid #c9c9c9; border-right: 2px solid #c9c9c9; }
.row2 { margin-left: -9px; width: 1344px; padding-top: 4px; border-bottom: 2px solid #c9c9c9; border-right: 2px solid #c9c9c9; }
.row3 { margin-left: 127px; width: 743px; height: 40px; padding-top: 1px; border-right: 1px solid #d5d5d5; }

.btn, .cell {
  fill: none;
  stroke: #111;
  stroke-width: 1.5;
  stroke-linecap: round;
  stroke-linejoin: round;
}
.btn {
  flex: none;
  width: 35px;
  height: 34px;
  box-sizing: border-box;
  display: flex;
  align-items: center;
  justify-content: center;
  border: 1px solid transparent;
}
.on, .on-left, .on-right { background: #c4dff6; border: 1px solid #9ccbf2; }
.ico {
  width: 30px;
  height: 30px;
  flex: none;
  overflow: visible;
}
.ico-text { font: 700 11px "Noto Sans CJK SC", sans-serif; text-anchor: middle; stroke: none; }
.ico-help { font: 700 15px "Liberation Sans", sans-serif; text-anchor: middle; fill: #fff; stroke: none; }
.ico-label { font: 700 10px "Liberation Serif", serif; text-anchor: middle; fill: #222; stroke: none; }
.ico-3d { font: 700 32px "Liberation Sans", sans-serif; text-anchor: middle; fill: #6f6e60; stroke: #222; stroke-width: 1; }

.sep { flex: none; height: 30px; position: relative; }
.sep::after { content: ""; position: absolute; left: calc(50% - 1px); top: 0; bottom: 0; width: 1px; background: #a9a9a9; }
.sep.clear::after { left: auto; right: 0; background: #d0d0d0; height: 38px; top: -4px; }
.w2 { width: 2px; } .w3 { width: 3px; } .w5 { width: 5px; } .w6 { width: 6px; } .w7 { width: 7px; } .w8 { width: 8px; }

.grip { flex: none; height: 34px; background: radial-gradient(circle, #a8a8a8 .8px, transparent 1.1px) center top / 3px 3.6px repeat-y; position: relative; }
.g5 { width: 5px; }
.g10 { width: 10px; }
.g12 { width: 12px; }
.g14 { width: 14px; }
.g17 { width: 17px; }
.g24 { width: 24px; }

.combo {
  flex: none;
  width: 130px;
  height: 25px;
  margin-top: 2px;
  background: #fff;
  display: flex;
  align-items: center;
  position: relative;
}
.combo-check { width: 23px; padding-left: 6px; box-sizing: border-box; font-size: 11px; }
.combo-label { font-size: 12px; }
.combo-arrow {
  position: absolute;
  right: 0;
  top: 0;
  bottom: 0;
  width: 11px;
  background: #e3e3e3;
  border: 1px solid #c4c4c4;
  box-sizing: border-box;
  display: flex;
  align-items: center;
  justify-content: center;
}
.chev { width: 8px; height: 5px; fill: none; stroke: #555; stroke-width: 1.2; }

.main { display: flex; height: 892px; }
.dock { flex: none; width: 95px; display: flex; align-items: flex-start; }
.panel { box-sizing: border-box; }
.panel-left {
  width: 71px;
  margin-left: -15px;
  margin-top: 74px;
  padding-top: 5px;
  padding-bottom: 5px;
  border-right: 2px solid #cfcfcf;
  border-bottom: 2px solid #cfcfcf;
}
.panel-right {
  width: 39px;
  margin-top: 41px;
  height: 262px;
  border-left: 1px solid #d0d0d0;
  border-bottom: 2px solid #cfcfcf;
}
.grip-h { height: 3px; margin: 0 2px 2px; background: radial-gradient(circle, #a8a8a8 .8px, transparent 1.1px) left center / 3.6px 3px repeat-x; }
.grip-h.top { margin-top: 1px; margin-bottom: 4px; }
.grid { display: grid; grid-template-columns: 35px 35px; grid-auto-rows: 35.3px; }
.stack { display: flex; flex-direction: column; }
.cell { display: flex; align-items: center; justify-content: center; height: 35.3px; box-sizing: border-box; }
.stack .cell { width: 36px; margin-left: 1px; }
.cell.short { height: 33px; }
.rule { height: 2px; margin: 1.5px 2px 1.5px 0; background: #a9a9a9; }
.rule.wide { margin-top: 3px; margin-bottom: 3px; }
.hr { height: 1px; background: #cfcfcf; margin: 2px 0 2px; }

.canvas { flex: 1; min-width: 0; background: #fff; border-left: 2px solid #8a8a8a; border-top: 2px solid #8a8a8a; }
.scene { display: block; }

.status {
  height: 26px;
  box-sizing: border-box;
  border-top: 1px solid #dcdcdc;
  background: #f0f0f0;
  position: relative;
  display: flex;
  overflow: hidden;
}
.status-label { margin-left: -5px; margin-top: 14px; line-height: 14px; }
.status-div { position: absolute; left: 289px; top: 0; bottom: 0; width: 1px; background: #a8a8a8; }

.wm {
  position: absolute;
  width: 372px;
  text-align: center;
  font: 35px/44px "Liberation Sans", "Noto Sans CJK SC", sans-serif;
  white-space: nowrap;
  color: rgba(255, 255, 255, .35);
  -webkit-text-stroke: 4px rgba(175, 175, 175, .3);
  paint-order: stroke fill;
  transform: translate(-50%, -50%) rotate(-42deg);
}
.wm-cn { font-family: "Noto Sans CJK SC", sans-serif; }
.wm-a { left: 696px; top: 257px; }
.wm-b { left: 548px; top: 611px; }
.wm-c { left: 1098px; top: 611px; }
.wm-d { left: 1246px; top: 257px; }
.wm-e { left: 1648px; top: 611px; }
.wm-f { left: 146px; top: 257px; }

.brand {
  position: absolute;
  left: 1406px;
  top: 900px;
  font: 300 60px/80px "Noto Sans CJK SC", sans-serif;
  letter-spacing: 3px;
  color: #fff;
  -webkit-text-stroke: 1px #b0b0b0;
}
.brand-id {
  position: absolute;
  left: 1361px;
  top: 985px;
  font: 32px/36px "Liberation Sans", sans-serif;
  color: #fff;
  -webkit-text-stroke: 1px #aaa;
}
```
